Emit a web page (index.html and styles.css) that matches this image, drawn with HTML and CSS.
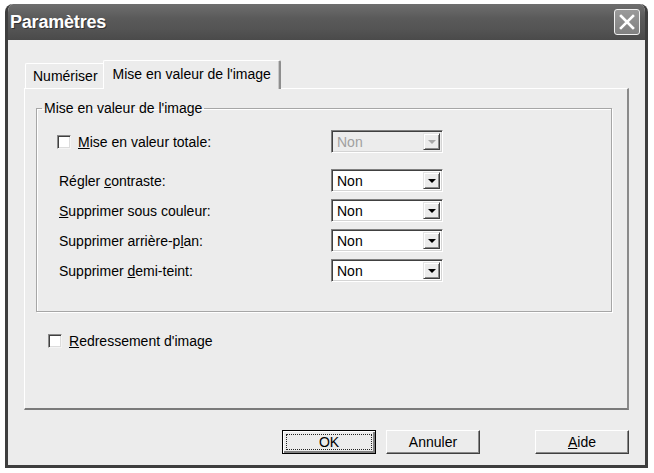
FILE: index.html
```html
<!DOCTYPE html>
<html lang="fr">
<head>
<meta charset="utf-8">
<title>Paramètres</title>
<link rel="stylesheet" href="styles.css">
</head>
<body>
<div class="window">
  <div class="titlebar">
    <span class="title">Paramètres</span>
    <span class="close">
      <svg width="16" height="16" viewBox="0 0 16 16"><path d="M2 2 L14 14 M14 2 L2 14" stroke="#fff" stroke-width="2.6" stroke-linecap="square"/></svg>
    </span>
  </div>
  <div class="client">
    <div class="tabs">
      <div class="tab">Numériser</div>
      <div class="tab active">Mise en valeur de l'image</div>
    </div>
    <div class="panel">
      <fieldset class="group">
        <legend>Mise en valeur de l'image</legend>
        <div class="rows">
          <div class="row first">
            <label class="check-label"><span class="checkbox"></span><span><u>M</u>ise en valeur totale:</span></label>
            <div class="combo disabled"><span class="value">Non</span><span class="arrow"><i></i></span></div>
          </div>
          <div class="row">
            <span class="label">Régler <u>c</u>ontraste:</span>
            <div class="combo"><span class="value">Non</span><span class="arrow"><i></i></span></div>
          </div>
          <div class="row">
            <span class="label"><u>S</u>upprimer sous couleur:</span>
            <div class="combo"><span class="value">Non</span><span class="arrow"><i></i></span></div>
          </div>
          <div class="row">
            <span class="label">Supprimer arrière-p<u>l</u>an:</span>
            <div class="combo"><span class="value">Non</span><span class="arrow"><i></i></span></div>
          </div>
          <div class="row">
            <span class="label">Supprimer <u>d</u>emi-teint:</span>
            <div class="combo"><span class="value">Non</span><span class="arrow"><i></i></span></div>
          </div>
        </div>
      </fieldset>
      <label class="check-label straighten"><span class="checkbox"></span><span><u>R</u>edressement d'image</span></label>
    </div>
    <div class="buttons">
      <button class="btn default"><span class="focus">OK</span></button>
      <button class="btn">Annuler</button>
      <button class="btn help"><u>A</u>ide</button>
    </div>
  </div>
</div>
</body>
</html>
```
FILE: styles.css
```css
* { box-sizing: border-box; }
html, body { margin: 0; padding: 0; }
body {
  background: #fff;
  width: 654px;
  height: 473px;
  overflow: hidden;
  font-family: "Liberation Sans", Arial, sans-serif;
  font-size: 14px;
  color: #000;
}
.window {
  margin: 4px 0 0 5px;
  width: 643px;
  height: 464px;
  background: #ececec;
  border: 3px solid #3e3e3e;
  border-top: 0;
  border-radius: 8px 8px 0 0;
  overflow: hidden;
  display: flex;
  flex-direction: column;
}
.titlebar {
  height: 36px;
  margin: 0 -3px;
  background: linear-gradient(#6e6e6e, #5a5a5a 40%, #545454 70%, #4a4a4a);
  display: flex;
  align-items: center;
  justify-content: space-between;
  padding: 0 8px 0 5px;
  border-radius: 8px 8px 0 0;
}
.title {
  color: #fff;
  font-weight: bold;
  font-size: 18px;
  letter-spacing: -0.2px;
  text-shadow: 1px 1px 0 #333;
}
.close {
  width: 26px;
  height: 26px;
  border: 1px solid #f0f0f0;
  border-radius: 3px;
  background: linear-gradient(#9a9a9a, #808080);
  display: flex;
  align-items: center;
  justify-content: center;
}
.client {
  flex: 1;
  padding: 20px 16px 0 16px;
  display: flex;
  flex-direction: column;
}
.tabs {
  display: flex;
  align-items: flex-end;
  height: 28px;
  position: relative;
  z-index: 1;
}
.tab {
  height: 25px;
  padding: 0 6px 0 7px;
  display: flex;
  align-items: center;
  border: 1px solid #fff;
  border-right: 1px solid #8e8e8e;
  border-bottom: 0;
  border-radius: 2px 2px 0 0;
  background: #ececec;
  margin-left: 1px;
}
.tab.active {
  height: 29px;
  margin-bottom: -1px;
  padding: 0 8px 2px 9px;
  margin-left: -2px;
  border-right: 2px solid #8e8e8e;
  box-shadow: inset -1px 0 0 #c8c8c8;
}
.panel {
  height: 322px;
  background: #ececec;
  border-top: 1px solid #fff;
  border-left: 1px solid #fff;
  border-right: 2px solid #8a8a8a;
  border-bottom: 2px solid #7a7a7a;
  padding: 11px 15px 0 11px;
}
.group {
  margin: 0;
  padding: 0 0 27px 0;
  border: 1px solid #a6a6a6;
  box-shadow: inset 1px 1px 0 #fff, 1px 1px 0 #fff;
  height: 212px;
}
.group legend {
  padding: 0 2px;
  margin-left: 5px;
  line-height: 16px;
}
.rows {
  display: flex;
  flex-direction: column;
  padding: 14px 0 0 20px;
}
.row {
  display: flex;
  align-items: center;
  justify-content: space-between;
  width: 386px;
  height: 23px;
  margin-top: 7px;
}
.row.first { margin-top: 0; margin-bottom: 9px; }
.label { padding-left: 2px; }
.check-label {
  display: flex;
  align-items: center;
  gap: 7px;
}
.checkbox {
  width: 14px;
  height: 14px;
  background: #fff;
  border-top: 1px solid #8a8a8a;
  border-left: 1px solid #8a8a8a;
  border-right: 1px solid #f4f4f4;
  border-bottom: 1px solid #f4f4f4;
  box-shadow: inset 1px 1px 0 #404040, inset -1px -1px 0 #dcdcdc;
}
.combo {
  width: 112px;
  height: 23px;
  background: #fff;
  border-top: 1px solid #808080;
  border-left: 1px solid #808080;
  border-right: 1px solid #fff;
  border-bottom: 1px solid #fff;
  box-shadow: inset 1px 1px 0 #404040, inset -1px -1px 0 #d4d4d4;
  display: flex;
  align-items: center;
  justify-content: space-between;
  padding: 2px;
}
.combo .value { padding-left: 3px; font-size: 14px; }
.combo .arrow {
  width: 17px;
  height: 17px;
  background: #ececec;
  border-top: 1px solid #e4e4e4;
  border-left: 1px solid #e4e4e4;
  border-right: 1px solid #404040;
  border-bottom: 1px solid #404040;
  box-shadow: inset 1px 1px 0 #fff, inset -1px -1px 0 #8a8a8a;
  display: flex;
  align-items: center;
  justify-content: center;
}
.combo .arrow i {
  width: 0;
  height: 0;
  border-left: 4px solid transparent;
  border-right: 4px solid transparent;
  border-top: 4px solid #000;
  margin-top: 1px;
}
.combo.disabled { background: #ececec; }
.combo.disabled .value { color: #a0a0a0; }
.combo.disabled .arrow i { border-top-color: #a8a8a8; }
.straighten {
  margin: 21px 0 0 12px;
}
.buttons {
  display: flex;
  justify-content: flex-end;
  margin-top: 20px;
}
.btn {
  width: 94px;
  height: 24px;
  font-family: inherit;
  font-size: 14px;
  color: #000;
  background: #ececec;
  border-top: 1px solid #fff;
  border-left: 1px solid #fff;
  border-right: 1px solid #404040;
  border-bottom: 1px solid #404040;
  box-shadow: inset -1px -1px 0 #8a8a8a;
  padding: 0;
  margin-left: 10px;
  display: flex;
  align-items: center;
  justify-content: center;
}
.btn.help { margin-left: 55px; }
.btn.default {
  border: 1px solid #000;
  box-shadow: inset 1px 1px 0 #fff, inset -2px -2px 0 #808080, inset -1px -1px 0 #404040;
  padding: 3px;
}
.btn .focus {
  flex: 1;
  align-self: stretch;
  display: flex;
  align-items: center;
  justify-content: center;
  border: 1px dotted #222;
}
```
